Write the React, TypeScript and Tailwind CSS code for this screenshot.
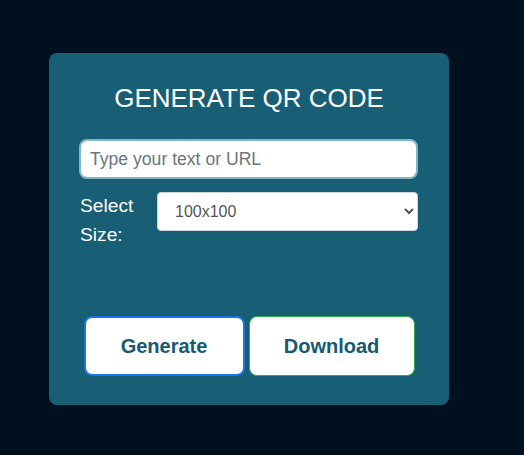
import { useState } from 'react'

function App() {
  const [text, setText] = useState('')
  const [size, setSize] = useState('100x100')

  return (
    <div className="min-h-[455px] w-full bg-[#01101f] pt-[53px] pl-[49px] font-['Liberation_Sans',Arial,sans-serif]">
      <div className="flex h-[352px] w-[400px] flex-col rounded-lg bg-[#185e74] px-[30px] pt-[30px]">
        <h2 className="text-center text-[26px] leading-[30px] font-normal text-white">
          GENERATE QR CODE
        </h2>

        <input
          type="text"
          value={text}
          onChange={(e) => setText(e.target.value)}
          placeholder="Type your text or URL"
          className="mt-[26px] h-[40px] w-[339px] rounded-lg border-2 border-[#80b6c6] bg-white pl-[9px] text-[17.6px] text-[#333] outline-none placeholder:text-[#6c757d]"
        />

        <div className="mt-[13px] flex items-start">
          <label className="ml-[1px] w-[70px] text-[19.2px] leading-[28.8px] text-white">
            Select Size:
          </label>
          <select
            value={size}
            onChange={(e) => setSize(e.target.value)}
            className="ml-[7px] h-[39px] w-[261px] rounded-[4px] border border-[#cfd4da] bg-white pl-[13px] text-[16px] text-[#555]"
          >
            <option>100x100</option>
            <option>200x200</option>
            <option>300x300</option>
            <option>400x400</option>
          </select>
        </div>

        <div className="mt-[66px] flex justify-center gap-[4px]">
          <button className="h-[60px] w-[161px] rounded-lg border-2 border-[#1a73e8] bg-white text-[20px] font-bold text-[#175a70]">
            Generate
          </button>
          <button className="h-[60px] w-[166px] rounded-lg border border-[#2fae4a] bg-white text-[20px] font-bold text-[#175a70]">
            Download
          </button>
        </div>
      </div>
    </div>
  )
}

export default App
